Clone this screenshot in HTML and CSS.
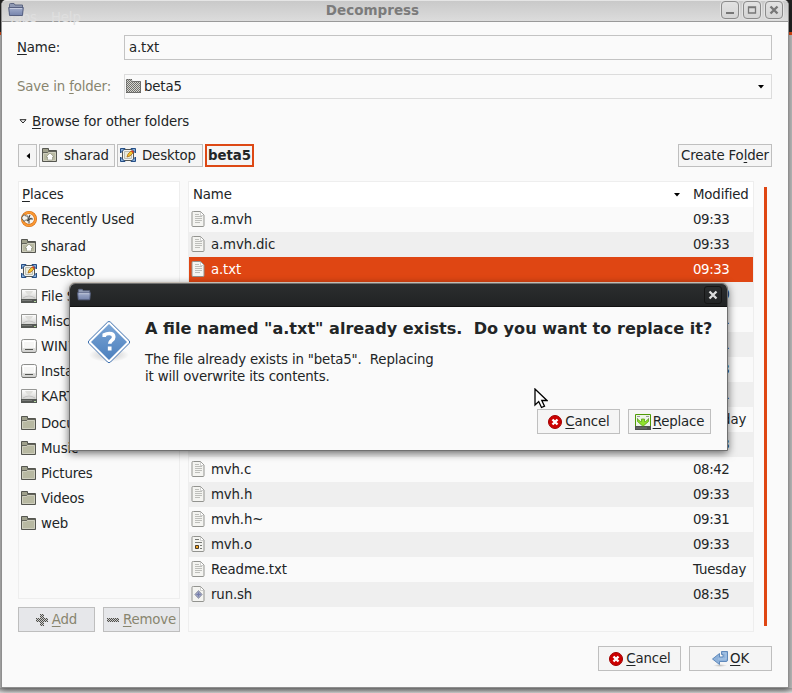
FILE: index.html
```html
<!DOCTYPE html>
<html lang="en">
<head>
<meta charset="utf-8">
<title>Decompress</title>
<link rel="stylesheet" href="styles.css">
</head>
<body>
<svg class="sprite" width="0" height="0" aria-hidden="true">
  <defs>
    <linearGradient id="gBlue" x1="0" y1="0" x2="0" y2="1"><stop offset="0" stop-color="#a3aecb"/><stop offset="1" stop-color="#7684ac"/></linearGradient>
    <linearGradient id="gDrive" x1="0" y1="0" x2="0" y2="1"><stop offset="0" stop-color="#fff"/><stop offset="1" stop-color="#cdcdcb"/></linearGradient>
    <linearGradient id="gAsk" x1="0" y1="0" x2="0" y2="1"><stop offset="0" stop-color="#7ba5d5"/><stop offset="1" stop-color="#4b7fbd"/></linearGradient>
    <radialGradient id="gShade"><stop offset="0" stop-color="#000" stop-opacity=".22"/><stop offset="1" stop-color="#000" stop-opacity="0"/></radialGradient>
    <pattern id="dots" width="2" height="2" patternUnits="userSpaceOnUse"><path d="M0 0h1v1H0zM1 1h1v1H1z" fill="#4e4e4a" shape-rendering="crispEdges"/></pattern>
    <symbol id="folder" viewBox="0 0 16 16"><path d="M.5 1.500h6v2h8v11H.5z" fill="#a0a18c" stroke="#555650"/><path d="M1.500 6.500h4l1-1h7v8h-12z" fill="#b8b9a2" stroke="#cfcfbf"/><path d="M1 5.500h4.500l1-1H14" stroke="#62635a" fill="none"/></symbol>
    <symbol id="home" viewBox="0 0 16 16"><use href="#folder"/><path d="M8 6l4 4h-1.500v3h-5v-3H4z" fill="#fff" stroke="#888976" stroke-width=".6"/></symbol>
    <symbol id="desktop" viewBox="0 0 16 16"><path d="M2.500 2.500h11v11h-11z" fill="#f4f4ef" stroke="#555753"/><path d="M4.500 4.500h7v7h-7z" fill="#e9ead9" stroke="#babdb6"/><path d="M.5 1.500h4.500L.5 6zM15.500 1.500v4.500L11 1.500zM15.500 14.500H11l4.500-4.500zM.5 14.500V10L5 14.500z" fill="#85add8" stroke="#264f86" stroke-linejoin="round"/><path d="M7 10l1-3 3-3 2 2-3 3z" fill="#f2c52b" stroke="#a55c11" stroke-width=".7"/><path d="M11 4l1-1 2 2-1 1z" fill="#d33b22"/></symbol>
    <symbol id="recent" viewBox="0 0 16 16"><circle cx="8" cy="8" r="6.500" fill="#f4f4f0" stroke="#d06a10" stroke-width="3"/><circle cx="8" cy="8" r="6.500" fill="none" stroke="#fb9a35" stroke-width="1.800"/><path d="M9 4l-1.500 4H12M8 8v4.500M6 10l4.500-3" stroke="#444" stroke-width="1.100" fill="none"/><path d="M.5 7L3 3.500 4.500 5H7v4H4.500L3 10.500z" fill="#f3f3ef" stroke="#555753" stroke-width=".9"/></symbol>
    <symbol id="disk" viewBox="0 0 16 16"><path d="M.5 1.500h15v11H.5z" fill="url(#gDrive)" stroke="#969795"/><path d="M4 3q4 8 8 0" fill="#dededb"/><path d="M2 10q6-4 12 0" fill="none" stroke="#b5b5b5" stroke-width=".7"/><path d="M0 11h16v4H0z" fill="#555855"/><path d="M1 12.500h10" stroke="#777a77"/><path d="M13 13.500h2" stroke="#b6d8a0"/></symbol>
    <symbol id="volume" viewBox="0 0 16 16"><rect x=".5" y="1.500" width="15" height="13" rx="2" fill="url(#gDrive)" stroke="#8d8e8c"/><path d="M2.500 10V3.500h11V10" fill="#f6f6f5" stroke="#fff"/><path d="M4 11.500h8" stroke="#555753"/><path d="M1.500 14.500h13" stroke="#6d6e6b"/></symbol>
    <symbol id="sheet" viewBox="0 0 16 16"><path d="M2.500.5h7l3.500 3.500v10.500a1 1 0 0 1-1 1h-10a1 1 0 0 1-1-1v-13a1 1 0 0 1 1-1z" fill="#f4f4f1" stroke="#92938f"/><path d="M9.500 1v3.500H13" fill="#fff" stroke="#bbb" stroke-width=".7"/></symbol>
    <symbol id="text" viewBox="0 0 16 16"><use href="#sheet"/><path d="M4 3.500h4M4 5.500h7M4 7.500h7M4 9.500h7M4 11.500h5" stroke="#bdbeba"/></symbol>
    <symbol id="object" viewBox="0 0 16 16"><use href="#sheet"/><path d="M4 3.500h4M4 6.500h7M9 9.500h2M9 12.500h2" stroke="#777975"/><path d="M4.500 9.500h3v3h-3z" fill="#f5a623" stroke="#4a3c28"/></symbol>
    <symbol id="script" viewBox="0 0 16 16"><use href="#sheet"/><path d="M7.500 4.500l3.700 4-3.700 4-3.700-4z" fill="#9ca2c0" stroke="#8a8f9f" stroke-width=".8"/><path d="M5.500 8.500h4M7.500 6.500v4" stroke="#747cab"/></symbol>
    <symbol id="winicon" viewBox="0 0 16 14"><path d="M1.500 11V1.500a1 1 0 0 1 1-1h3.500l1 1.500h7.500v9z" fill="#8e98b2" stroke="#5c6681"/><path d="M.7 4.500h14.600l-.8 8h-13z" fill="url(#gBlue)" stroke="#566080"/><path d="M2 5.500h12" stroke="#c3cadd"/></symbol>
    <symbol id="stop" viewBox="0 0 16 16"><circle cx="8" cy="8" r="6.500" fill="#cc0000" stroke="#a00000"/><path d="M5.500 5.500l5 5M10.500 5.500l-5 5" stroke="#fff" stroke-width="2.400"/></symbol>
    <symbol id="save" viewBox="0 0 16 16"><path d="M.5.5h15v12H.5z" fill="#edf5e7" stroke="#4e9a06"/><path d="M0 12h16v4H0z" fill="#4d504c"/><path d="M2 2.500h3M2 4.500h1M11 2.500h3M13 4.500h1" stroke="#999"/><path d="M6.500 5h3v2.500h1L13.500 5v2.500L8 12.300 2.500 7.500V5l3 2.500h1z" fill="#8fe02c" stroke="#4e9a06" stroke-width=".7"/><path d="M1 14h11" stroke="#777"/></symbol>
    <symbol id="return" viewBox="0 0 16 16"><ellipse cx="8" cy="14.500" rx="7" ry="1.500" fill="url(#gShade)"/><path d="M9.500.5h6V9a1.500 1.500 0 0 1-1.500 1.500H7.500v3L.5 8l7-5.500v3.500h3.500V3.500H9.500z" fill="#8fb2da" stroke="#5f89bb"/><path d="M11 2h3v6H6" fill="none" stroke="#a9c6e6"/></symbol>
    <symbol id="question" viewBox="0 0 44 44"><ellipse cx="22" cy="35" rx="20" ry="7" fill="url(#gShade)"/><path d="M20.500 2.200q1.500-1.500 3 0L42 20.500q1.500 1.500 0 3L23.500 42q-1.500 1.500-3 0L2 23.500q-1.500-1.500 0-3z" fill="#fff" stroke="#3c6fae"/><path d="M22 4L40 22 22 40 4 22z" fill="url(#gAsk)"/><path d="M17.300 17v-2.200q2.200-1.300 5-1.300 4.400 0 4.400 3.500c0 3.500-4 3.200-4 6.800M22.700 26.500v4" fill="none" stroke="#fff" stroke-width="3.700"/></symbol>
  </defs>
</svg>

<div class="screen">
  <main class="window">
    <header class="titlebar">
      <div class="ghost"><span>Tabs</span><span>Help</span></div>
      <svg class="app-icon"><use href="#winicon"/></svg>
      <h1>Decompress</h1>
      <div class="controls">
        <i><svg viewBox="0 0 16 16"><path d="M4 11h8" stroke="#777" stroke-width="2"/></svg></i>
        <i><svg viewBox="0 0 16 16"><path d="M4.500 5h7v6h-7zM4 5.500h8" fill="none" stroke="#777" stroke-width="1.300"/></svg></i>
        <i><svg viewBox="0 0 16 16"><path d="M4.500 4.500l7 7M11.500 4.500l-7 7" stroke="#777" stroke-width="2.400"/></svg></i>
      </div>
    </header>

    <section class="form">
      <div class="field"><label><u>N</u>ame:</label><div class="entry">a.txt</div></div>
      <div class="field muted"><label>Save in <u>f</u>older:</label>
        <div class="combo"><svg class="ic" viewBox="0 0 16 16"><path d="M0 1h6v2h9v12H0z" fill="#d6d6d0"/><path d="M0 1h6v2h9v12H0z" fill="url(#dots)" opacity=".75"/><path d="M.5 14.500V1.500h5l1 2h8v11z" fill="none" stroke="#555" stroke-dasharray="1 1"/></svg><span>beta5</span><svg class="down" viewBox="0 0 6 4"><path d="M0 0h6L3 3.500z"/></svg></div></div>
      <div class="expander"><svg viewBox="0 0 8 5"><path d="M1 .7h6L4 4z" fill="#fff" stroke="#222"/></svg><span><u>B</u>rowse for other folders</span></div>
      <div class="pathbar">
        <div class="btn back"><svg viewBox="0 0 4 6"><path d="M4 0v6L.5 3z"/></svg></div>
        <div class="btn crumb home"><svg class="ic"><use href="#home"/></svg>sharad</div>
        <div class="btn crumb desk"><svg class="ic"><use href="#desktop"/></svg>Desktop</div>
        <div class="btn current">beta5</div>
        <div class="btn create"><span>Create Fo<u>l</u>der</span></div>
      </div>
    </section>

    <section class="browser">
      <div class="side">
        <div class="places">
          <div class="head"><span><u>P</u>laces</span></div>
          <div class="place"><svg class="ic"><use href="#recent"/></svg>Recently Used</div>
          <div class="place gap"><svg class="ic"><use href="#home"/></svg>sharad</div>
          <div class="place"><svg class="ic"><use href="#desktop"/></svg>Desktop</div>
          <div class="place"><svg class="ic"><use href="#disk"/></svg>File System</div>
          <div class="place"><svg class="ic"><use href="#disk"/></svg>Misc</div>
          <div class="place"><svg class="ic"><use href="#volume"/></svg>WIN7</div>
          <div class="place"><svg class="ic"><use href="#volume"/></svg>Install</div>
          <div class="place"><svg class="ic"><use href="#disk"/></svg>KARTIK</div>
          <div class="place gap"><svg class="ic"><use href="#folder"/></svg>Documents</div>
          <div class="place"><svg class="ic"><use href="#folder"/></svg>Music</div>
          <div class="place"><svg class="ic"><use href="#folder"/></svg>Pictures</div>
          <div class="place"><svg class="ic"><use href="#folder"/></svg>Videos</div>
          <div class="place"><svg class="ic"><use href="#folder"/></svg>web</div>
        </div>
        <div class="pair">
          <div class="btn off"><svg class="sm" viewBox="0 0 12 12"><path d="M4 0h4v4h4v4H8v4H4V8H0V4h4z" fill="#ccc"/><path d="M4 0h4v4h4v4H8v4H4V8H0V4h4z" fill="url(#dots)"/></svg><span><u>A</u>dd</span></div>
          <div class="btn off"><svg class="sm" viewBox="0 0 12 12"><path d="M0 4h12v4H0z" fill="#ccc"/><path d="M0 4h12v4H0z" fill="url(#dots)"/></svg><span><u>R</u>emove</span></div>
        </div>
      </div>
      <div class="files">
        <div class="head filehead"><span>Name</span><svg class="down" viewBox="0 0 6 4"><path d="M0 0h6L3 3.500z"/></svg><span class="time">Modified</span></div>
        <div class="file"><svg class="ic"><use href="#text"/></svg><span>a.mvh</span><span class="time">09:33</span></div>
        <div class="file"><svg class="ic"><use href="#text"/></svg><span>a.mvh.dic</span><span class="time">09:33</span></div>
        <div class="file selected"><svg class="ic"><use href="#text"/></svg><span>a.txt</span><span class="time">09:33</span></div>
        <div class="file"><span class="time">09:30</span></div>
        <div class="file"><span class="time">09:31</span></div>
        <div class="file"><span class="time">09:31</span></div>
        <div class="file"><span class="time">09:33</span></div>
        <div class="file"><span class="time">09:31</span></div>
        <div class="file"><span class="time day">Tuesday</span></div>
        <div class="file"><span class="time">09:33</span></div>
        <div class="file"><svg class="ic"><use href="#text"/></svg><span>mvh.c</span><span class="time">08:42</span></div>
        <div class="file"><svg class="ic"><use href="#text"/></svg><span>mvh.h</span><span class="time">09:33</span></div>
        <div class="file"><svg class="ic"><use href="#text"/></svg><span>mvh.h~</span><span class="time">09:31</span></div>
        <div class="file"><svg class="ic"><use href="#object"/></svg><span>mvh.o</span><span class="time">09:33</span></div>
        <div class="file"><svg class="ic"><use href="#text"/></svg><span>Readme.txt</span><span class="time day">Tuesday</span></div>
        <div class="file"><svg class="ic"><use href="#script"/></svg><span>run.sh</span><span class="time">08:35</span></div>
      </div>
      <div class="scroll"></div>
    </section>

    <footer class="actions">
      <div class="btn"><svg class="ic"><use href="#stop"/></svg><span><u>C</u>ancel</span></div>
      <div class="btn"><svg class="ic"><use href="#return"/></svg><span><u>O</u>K</span></div>
    </footer>
  </main>

  <div class="dialog">
    <header class="dialog-title">
      <svg class="app-icon"><use href="#winicon"/></svg>
      <i><svg viewBox="0 0 16 16"><path d="M4.500 4.500l7 7M11.500 4.500l-7 7" stroke="#ddd" stroke-width="2.300"/></svg></i>
    </header>
    <div class="message">
      <svg class="ask"><use href="#question"/></svg>
      <div>
        <h2>A file named "a.txt" already exists.&nbsp; Do you want to replace it?</h2>
        <p>The file already exists in "beta5".&nbsp; Replacing<br>it will overwrite its contents.</p>
      </div>
    </div>
    <div class="actions">
      <div class="btn"><svg class="ic"><use href="#stop"/></svg><span><u>C</u>ancel</span></div>
      <div class="btn"><svg class="ic"><use href="#save"/></svg><span><u>R</u>eplace</span></div>
    </div>
  </div>
  <svg class="cursor" viewBox="0 0 14 21"><path d="M1 1v16l3.700-3.500L7.500 19.500l3-1.400L7.800 12.500H13z" fill="#fff" stroke="#000" stroke-width="1.300"/></svg>
</div>
</body>
</html>
```
FILE: styles.css
```css
* { box-sizing: border-box; }
body { margin: 0; font: 13.333px/17px "DejaVu Sans", sans-serif; letter-spacing: -.15px; color: #222526; }
svg { display: block; flex: none; }
i { display: block; }
u { text-decoration: underline; text-decoration-thickness: 1px; text-underline-offset: 2px; text-decoration-skip-ink: none; }
.sprite { position: absolute; }
.ic { width: 16px; height: 16px; }
.screen {
  position: relative; width: 792px; height: 693px; overflow: hidden; padding-left: 1px;
  background: linear-gradient(#222 0 32px, #dd4814 32px 35px, #bfbfbf 35px);
}
.window {
  position: relative; z-index: 1; width: 788px; height: 688px; background: #fafafa;
  border: 1px solid #8f8f8f; border-top-color: #e5e5e5; border-radius: 5px 5px 0 0;
  box-shadow: 0 3px 6px #0006; overflow: hidden;
}
.screen::after { content: ""; position: absolute; inset: 688px 0 0; background: linear-gradient(#9d9d9d, #dedede); }
.titlebar { position: relative; display: flex; height: 21px; background: linear-gradient(#c9c9c9, #dcdcdc); border-bottom: 1px solid #999; justify-content: center; }
.titlebar .app-icon { position: absolute; left: 6px; top: 2px; width: 16px; height: 14px; }
.titlebar h1 { margin: 0; font-size: 13.500px; letter-spacing: 0; line-height: 18px; color: #7b7b7b; padding-right: 45px; }
.ghost { position: absolute; left: 6px; top: 8px; color: #dfdfdf; display: flex; gap: 14px; line-height: 17px; }
.controls { position: absolute; right: 5px; top: 0; display: flex; gap: 4px; }
.controls i { width: 18px; height: 18px; border: 1px solid #8b8b8b; border-radius: 4px; background: linear-gradient(#e2e2e2, #d5d5d5); box-shadow: 0 0 0 1px #e4e4e4; }
.controls svg { width: 16px; height: 16px; }

.form { padding: 13px 16px 0 16px; }
.field { display: grid; grid-template-columns: 106px 1fr; align-items: center; height: 25px; margin-bottom: 14px; }
.field label { position: relative; left: -1px; }
.muted label { color: #88856f; }
.entry, .combo { height: 25px; border: 1px solid #c3c3c3; display: flex; align-items: center; padding-left: 4px; }
.combo { border-color: #dcdcdc; padding: 0 7px 0 1px; }
.combo .ic { margin-top: -2px; }
.combo span { margin-left: 2px; flex: 1; }
.down { width: 6px; height: 4px; }
.expander { display: flex; align-items: center; height: 17px; margin-bottom: 14px; padding-left: 1px; }
.expander svg { width: 8px; height: 5px; margin-right: 5px; }
.pathbar { display: flex; height: 23px; }
.btn { display: flex; align-items: center; justify-content: center; border: 1px solid #bfbfbf; background: #f5f5f5; white-space: nowrap; }
.back { width: 19px; margin-right: 2px; }
.back svg { width: 4px; height: 6px; }
.crumb { gap: 6px; margin-right: 2px; justify-content: flex-start; padding-left: 2px; }
.crumb .ic { margin-top: -1px; }
.home { width: 76px; }
.desk { width: 86px; }
.current { width: 49px; border: 2px solid #dd4814; font-weight: bold; letter-spacing: 0; }
.create { width: 94px; margin-left: auto; }

.browser { display: flex; height: 451px; margin: 14px 20px 0 16px; }
.side { width: 162px; margin-right: 8px; display: flex; flex-direction: column; justify-content: space-between; }
.places { height: 418px; border: 1px solid #eee; }
.head { height: 25px; background: #fff; padding: 4px 3px; }
.place { height: 25px; display: flex; align-items: center; gap: 4px; padding-left: 2px; white-space: nowrap; }
.place .ic, .file .ic { margin-top: -1px; }
.gap { margin-top: 2px; }
.pair { display: flex; gap: 8px; }
.off { width: 77px; height: 25px; color: #88856f; background: #e6e7ea; border-color: #bebebe; gap: 4px; }
.sm { width: 12px; height: 12px; }
.files { width: 566px; border: 1px solid #eee; }
.filehead { display: flex; align-items: center; padding: 0 0 0 4px; }
.filehead .down { margin: 0 13px 0 auto; }
.file { display: flex; align-items: center; height: 25px; padding-left: 2px; gap: 4px; }
.file:nth-child(odd) { background: #efefef; }
.files .selected { background: #df4613; color: #fff; }
.time { width: 60px; white-space: nowrap; }
.file .time { margin-left: auto; letter-spacing: -.4px; }
.file .day { letter-spacing: -.15px; }
.scroll { width: 3px; height: 439px; margin: 6px 0 0 10px; background: #df4613; }
.actions { display: flex; justify-content: flex-end; gap: 8px; }
.window > .actions { padding: 14px 16px 0; }
.actions .btn { width: 83px; height: 25px; gap: 2px; }

.dialog { position: absolute; z-index: 2; left: 69px; top: 283px; width: 659px; height: 168px; background: #fafafa; border: 1px solid #707070; border-radius: 6px 6px 0 0; box-shadow: 0 -1px 0 #c4bdb4, 0 2px 8px #0009; overflow: hidden; }
.dialog-title { height: 23px; background: linear-gradient(#2c2e2f, #212324); border-bottom: 1px solid #111; display: flex; justify-content: space-between; padding: 3px 5px 0 7px; }
.dialog-title .app-icon { width: 14px; height: 14px; margin-top: 1px; }
.dialog-title i { width: 18px; height: 18px; border: 1px solid #151515; border-radius: 3px; margin-top: -1px; }
.message { display: flex; gap: 13px; padding: 13px 0 0 17px; height: 102px; }
.ask { width: 44px; height: 44px; }
.message h2 { margin: -1px 0 12px 1px; font-size: 16.080px; letter-spacing: 0; line-height: 20px; white-space: nowrap; }
.message p { margin: 0 0 0 1px; }
.dialog .actions { padding-right: 16px; }
.cursor { position: absolute; z-index: 3; left: 534px; top: 388px; width: 14px; height: 21px; }
```
